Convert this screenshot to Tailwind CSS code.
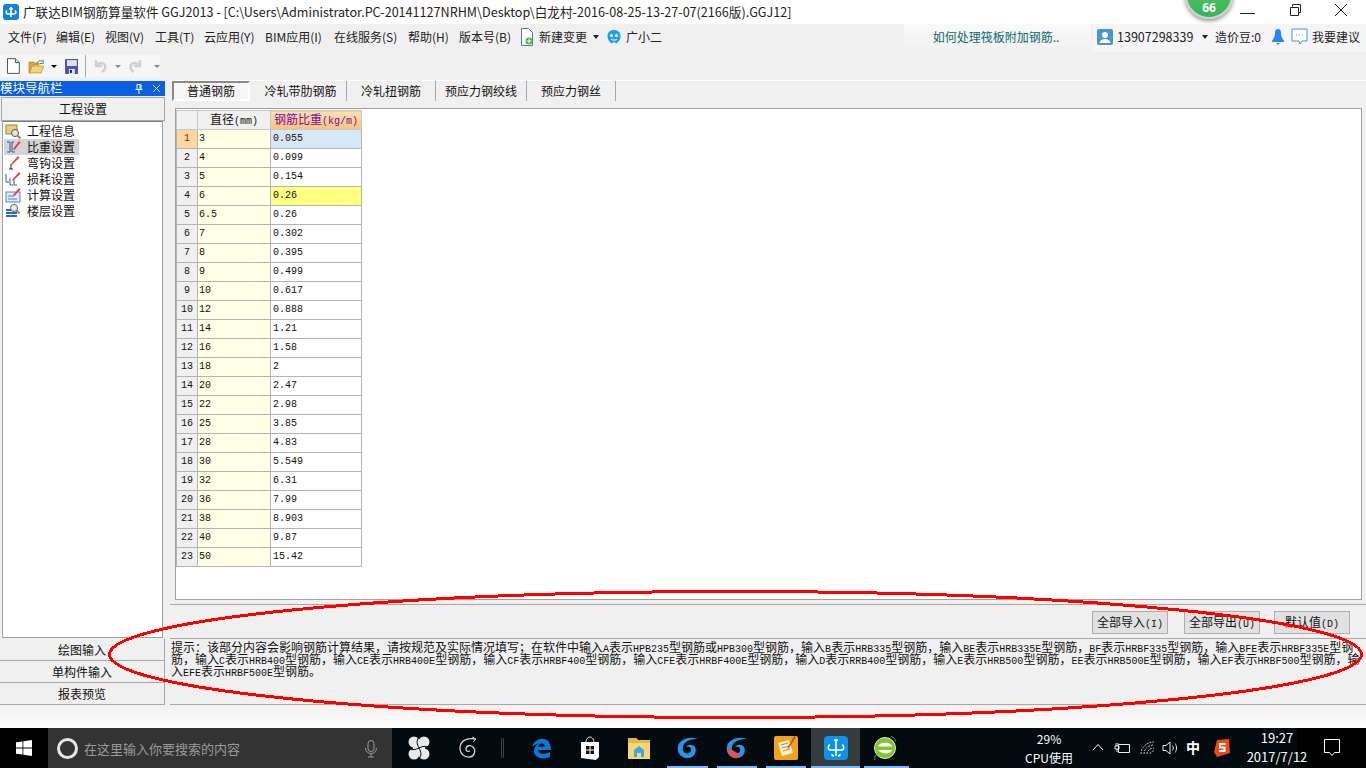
<!DOCTYPE html>
<html lang="zh-CN">
<head>
    <meta charset="UTF-8">
    <title>广联达BIM钢筋算量软件 GGJ2013</title>
    <script src="https://cdn.jsdelivr.net/npm/@tailwindcss/browser@4"></script>
</head>
<body class="bg-[#f0f0f0]">
<div class="relative w-[1366px] h-[768px] overflow-hidden flex flex-col bg-[#f0f0f0] text-[12px] leading-none text-[#111] font-['Noto_Sans_CJK_SC',sans-serif]">

    <!-- title bar -->
    <div class="h-[24px] shrink-0 bg-white flex items-center relative">
        <svg class="ml-[3px] w-[16px] h-[16px]" viewBox="0 0 16 16"><rect width="16" height="16" rx="3" fill="#1283dd"/><path d="M8 3v10M4 6.500C2.500 8 3 10 5 10h6c2 0 2.500-2 1-3.500M6 5h4" stroke="#fff" stroke-width="1.700" fill="none"/></svg>
        <span class="ml-[4px] whitespace-nowrap text-[12.600px] text-[#222]">广联达BIM钢筋算量软件 GGJ2013 - [C:\Users\Administrator.PC-20141127NRHM\Desktop\白龙村-2016-08-25-13-27-07(2166版).GGJ12]</span>
        <svg class="absolute left-[1240px] top-[4px] w-[16px] h-[16px]" viewBox="0 0 16 16"><path d="M0 9.500h15" stroke="#222"/></svg>
        <svg class="absolute left-[1289px] top-[3px] w-[14px] h-[14px]" viewBox="0 0 14 14"><path d="M3.500 3.500V1.500h8v8h-2M1.500 4.500h8v8h-8z" stroke="#222" fill="none"/></svg>
        <svg class="absolute left-[1334px] top-[3px] w-[14px] h-[14px]" viewBox="0 0 14 14"><path d="M1 1l12 12M13 1L1 13" stroke="#222"/></svg>
    </div>

    <!-- menu bar -->
    <div class="h-[28px] shrink-0 flex items-center relative pb-[2px]">
        <div class="flex items-center pl-[8px] text-[#222] whitespace-nowrap">
            <span class="w-[48px]">文件(F)</span>
            <span class="w-[49px]">编辑(E)</span>
            <span class="w-[50px]">视图(V)</span>
            <span class="w-[49px]">工具(T)</span>
            <span class="w-[61px]">云应用(Y)</span>
            <span class="w-[69px]">BIM应用(I)</span>
            <span class="w-[74px]">在线服务(S)</span>
            <span class="w-[51px]">帮助(H)</span>
            <span class="w-[60px]">版本号(B)</span>
            <svg class="w-[16px] h-[18px] mr-[4px]" viewBox="0 0 16 18"><path d="M2.500.5h7l4 4v13h-11z" fill="#fff" stroke="#3f7fc0"/><circle cx="10" cy="13" r="3.500" fill="#58a83a"/><path d="M10 10.500v5M7.500 13h5" stroke="#fff"/></svg>
            <span class="w-[54px]">新建变更</span>
            <span class="w-0 h-0 border-x-[3px] border-x-transparent border-t-[4px] border-t-[#222] mr-[7px]"></span>
            <svg class="w-[16px] h-[16px] mr-[4px]" viewBox="0 0 16 16"><path d="M8 1c4 0 6.500 2.500 6.500 6 0 4-2.500 6-4 7.500L8 13l-2.500 1.500C4 13 1.500 11 1.500 7 1.500 3.500 4 1 8 1z" fill="#22a0e6"/><circle cx="5.500" cy="6.500" r="1.500" fill="#fff"/><circle cx="10.500" cy="6.500" r="1.500" fill="#fff"/><path d="M5 10c2 1.500 4 1.500 6 0" stroke="#fff" fill="none"/></svg>
            <span>广小二</span>
        </div>
        <!-- hot question + account -->
        <div class="absolute left-[904px] top-0 w-[187px] h-[28px] pb-[2px] pr-[3px] bg-gradient-to-b from-[#fafafa] to-[#f0f0f0] flex items-center justify-center text-[#0c6a6e]">如何处理筏板附加钢筋..</div>
        <div class="absolute left-[1093px] top-0 w-[273px] h-[28px] pb-[2px] bg-[#f5f5f5] flex items-center whitespace-nowrap text-[#222]">
            <svg class="ml-[4px] w-[16px] h-[16px] mr-[4px]" viewBox="0 0 16 16"><rect width="16" height="16" rx="2" fill="#4a94cf"/><circle cx="8" cy="6" r="3" fill="#fff"/><path d="M2.500 14c.5-3 3-4 5.500-4s5 1 5.500 4z" fill="#fff"/></svg>
            <span class="w-[84px] text-[12.500px]">13907298339</span>
            <span class="w-0 h-0 border-x-[3px] border-x-transparent border-t-[4px] border-t-[#222] ml-[1px] mr-[7px]"></span>
            <span class="w-[49px]">造价豆:0</span>
            <svg class="ml-[7px] w-[14px] h-[16px]" viewBox="0 0 14 16"><path d="M7 0c2 0 3 1.500 3 4 0 4 1.500 5.500 3 8v1H1v-1c1.500-2.500 3-4 3-8 0-2.500 1-4 3-4z" fill="#2a86ee"/><path d="M5 14h4l-2 2z" fill="#2a86ee"/></svg>
            <svg class="ml-[6px] w-[17px] h-[19px]" viewBox="0 0 17 19"><path d="M1 1h15v12h-5l-2 3-1-3H1z" fill="#fff" stroke="#4a94e0"/><path d="M5 7h1M8 7h1M11 7h1" stroke="#4a94e0"/></svg>
            <span class="ml-[4px]">我要建议</span>
        </div>
    </div>

    <!-- toolbar -->
    <div class="h-[28px] shrink-0 flex items-center">
        <div class="w-[160px] h-[22px] rounded-[3px] bg-[#f6f6f6] flex items-center pl-[7px]">
            <svg class="w-[13px] h-[16px]" viewBox="0 0 13 16"><path d="M.5.5h8l4 4v11H.500z" fill="#fff" stroke="#44546a"/><path d="M8.500.5v4h4" fill="#dde6f0" stroke="#44546a"/></svg>
            <svg class="ml-[8px] w-[17px] h-[15px]" viewBox="0 0 17 15"><path d="M1 3h5l1 1h4v2H5l-2 8H1z" fill="#d9a93c" stroke="#9a7420" stroke-width=".6"/><path d="M4 7h12l-2.500 7H1.500z" fill="#f6d672" stroke="#a8802a" stroke-width=".6"/><path d="M9 4c1-2 3-3 5-2l1.500-1v3.500H12" stroke="#5a7fa8" fill="none"/></svg>
            <span class="ml-[6px] w-0 h-0 border-x-[3px] border-x-transparent border-t-[3px] border-t-black"></span>
            <svg class="ml-[8px] w-[14px] h-[15px]" viewBox="0 0 14 15"><rect width="14" height="15" rx="1" fill="#4a55b8"/><rect x="2" y="1" width="10" height="6" fill="#dfe3ee"/><rect x="4" y="10" width="6" height="5" fill="#dfe3ee"/><rect x="5" y="11" width="2" height="3" fill="#222"/></svg>
            <span class="ml-[7px] w-px h-[22px] bg-[#aaa]"></span>
            <svg class="ml-[8px] w-[13px] h-[14px]" viewBox="0 0 13 14"><path d="M2 1v6h6M2.500 6.500C5 3 11.500 3 11.500 8c0 2.500-1.500 4-3.500 5" stroke="#d0d0d0" stroke-width="2.500" fill="none"/></svg>
            <span class="ml-[8px] w-0 h-0 border-x-[3px] border-x-transparent border-t-[3px] border-t-[#888]"></span>
            <svg class="ml-[8px] w-[13px] h-[14px]" viewBox="0 0 13 14"><path d="M11 1v6H5M10.500 6.500C8 3 1.500 3 1.500 8c0 2.500 1.500 4 3.500 5" stroke="#d0d0d0" stroke-width="2.500" fill="none"/></svg>
            <span class="ml-[12px] w-0 h-0 border-x-[3px] border-x-transparent border-t-[3px] border-t-[#888]"></span>
        </div>
    </div>

    <!-- main -->
    <div class="h-[625px] shrink-0 flex">
        <!-- navigation column -->
        <div class="w-[165px] shrink-0 flex flex-col pt-px">
            <div class="h-[15px] bg-[#0a5fe2] text-white flex items-center text-[12.500px] relative">
                <span>模块导航栏</span>
                <svg class="absolute left-[135px] top-[3px] w-[8px] h-[10px]" viewBox="0 0 8 10"><path d="M2 .5h4v5H2zM.5 5.500h7M4 5.500V10M5 .5v5" stroke="#fff" fill="none"/></svg>
                <svg class="absolute left-[152px] top-[3px] w-[9px] h-[9px]" viewBox="0 0 9 9"><path d="M1 1l7 7M8 1L1 8" stroke="#cfe0fa"/></svg>
            </div>
            <div class="mt-[1px] ml-px h-[24px] border border-[#a8a8a8] flex items-center justify-center">工程设置</div>
            <div class="mx-[2px] h-[517px] bg-white border border-[#a0a0a0] border-t-[#808080] pt-px pl-[1px]">
                <div class="flex flex-col" id="navList"></div>
            </div>
            <div class="mt-px h-[22px] border-b border-r border-[#a8a8a8] flex items-center justify-center">绘图输入</div>
            <div class="h-[22px] border-b border-r border-[#a8a8a8] flex items-center justify-center">单构件输入</div>
            <div class="h-[22px] border-b border-r border-[#a8a8a8] flex items-center justify-center">报表预览</div>
        </div>

        <!-- content column -->
        <div class="ml-[5px] flex-1 flex flex-col min-w-0">
            <div class="h-[21px] shrink-0 flex items-center pl-[2px] border-t border-white">
                <div class="w-[78px] h-[20px] border-2 border-[#8a8a8a] border-r-white border-b-white bg-[#f6f6f6] flex items-center justify-center">普通钢筋</div>
                <div class="w-[97px] h-[20px] border-r border-[#a8a8a8] flex items-center justify-center pl-[5px]">冷轧带肋钢筋</div>
                <div class="w-[89px] h-[20px] border-r border-[#a8a8a8] flex items-center justify-center">冷轧扭钢筋</div>
                <div class="w-[91px] h-[20px] border-r border-[#a8a8a8] flex items-center justify-center">预应力钢绞线</div>
                <div class="w-[89px] h-[20px] border-r border-[#a8a8a8] flex items-center justify-center">预应力钢丝</div>
            </div>
            <!-- grid box -->
            <div class="mt-[7px] ml-[5px] mr-[4px] h-[492px] shrink-0 bg-white border border-[#a0a0a0] pt-px">
                <table class="border-collapse table-fixed w-[185px] text-[10px] font-['Liberation_Mono',monospace] leading-none" id="grid"></table>
            </div>
            <div class="mt-[4px] h-[34px] shrink-0 border-t border-[#a8a8a8] flex justify-end items-start pt-[6px] pr-[16px] text-[10px] font-['Liberation_Mono',monospace]">
                <button class="w-[76px] h-[23px] bg-[#e1e1e1] border border-[#adadad]"><span class="font-['Noto_Sans_CJK_SC',sans-serif] text-[12px]">全部导入</span>(I)</button>
                <button class="ml-[16px] w-[76px] h-[23px] bg-[#e1e1e1] border border-[#adadad]"><span class="font-['Noto_Sans_CJK_SC',sans-serif] text-[12px]">全部导出</span>(U)</button>
                <button class="ml-[14px] w-[76px] h-[23px] bg-[#e1e1e1] border border-[#adadad]"><span class="font-['Noto_Sans_CJK_SC',sans-serif] text-[12px]">默认值</span>(D)</button>
            </div>
            <div class="h-[67px] border-t border-b border-[#a8a8a8] pl-px pt-[2px] whitespace-nowrap" id="notice"></div>
        </div>
    </div>

    <!-- strip above the taskbar -->
    <div class="h-[23px] shrink-0 bg-gradient-to-b from-[#f0f0f0] to-white"></div>

    <!-- taskbar -->
    <div class="h-[40px] shrink-0 bg-[#02090f] flex items-stretch text-white relative">
        <div class="w-[48px] bg-black flex items-center justify-center">
            <svg class="w-[16px] h-[16px]" viewBox="0 0 16 16"><path d="M0 2.300l6.500-.9v6.200H0zM7.300 1.300L16 0v7.600H7.300zM0 8.400h6.500v6.200L0 13.700zM7.300 8.400H16V16l-8.700-1.300z" fill="#fff"/></svg>
        </div>
        <div class="w-[344px] bg-[#333] flex items-center relative text-[#9a9a9a] text-[13px]">
            <span class="ml-[9px] w-[21px] h-[21px] rounded-full border-[3px] border-[#e6e6e6]"></span>
            <span class="ml-[6px]">在这里输入你要搜索的内容</span>
            <svg class="absolute left-[316px] top-[12px] w-[14px] h-[18px]" viewBox="0 0 14 18"><rect x="4" y="0.500" width="6" height="11" rx="3" fill="none" stroke="#999"/><path d="M1.500 8c0 3.500 2.500 5.500 5.500 5.500s5.500-2 5.500-5.500M7 13.500V17M4 17h6" stroke="#999" fill="none"/></svg>
        </div>
        <div class="w-[2px]"></div>
        <div class="w-[49px] flex items-center justify-center">
            <svg class="w-[22px] h-[24px]" viewBox="0 0 22 24"><circle cx="6" cy="6" r="5.500" fill="#e8e8e8"/><circle cx="16" cy="6" r="5.500" fill="#e8e8e8"/><circle cx="6" cy="18" r="5.500" fill="#e8e8e8"/><circle cx="16" cy="18" r="5.500" fill="#e8e8e8"/><rect x="5" y="6" width="12" height="12" fill="#e8e8e8"/><path d="M11 12C9 8 8 5 11 1M11 12c4-2 6-2 10-1M11 12c2 4 3 7 0 11M11 12c-4 2-6 2-10 1" stroke="#02090f" fill="none"/></svg>
        </div>
        <div class="w-[49px] flex items-center justify-center">
            <svg class="w-[20px] h-[22px]" viewBox="0 0 20 22"><path d="M17 2C10 .5 3 3 2 10c-.5 6 4 11 10 10 5-1 6-7 3-10-2.500-2.500-7-1.500-7 2 0 2 2 3 4 2" fill="none" stroke="#cfcfcf" stroke-width="1.300"/><path d="M14 0l4 2-3 3" fill="none" stroke="#cfcfcf"/></svg>
        </div>
        <div class="w-[25px] flex items-center pl-[9px]"><span class="w-[3px] h-[20px] border-x border-[#3c4248]"></span></div>
        <div class="w-[49px] flex items-center justify-center">
            <svg class="w-[21px] h-[21px]" viewBox="0 0 21 21"><path d="M1 9C3 3 8 0 13 1c5 1 7 5 7 11H7c.5 4 6 5 12 2v5c-7 3-15 1-16-5C2.500 10 5 7 8 5 6 6 3 7 1 9zM7 8.500h7c0-4-6-4-7 0z" fill="#0a78d7"/></svg>
        </div>
        <div class="w-[48px] flex items-center justify-center">
            <svg class="w-[20px] h-[24px]" viewBox="0 0 20 24"><path d="M6 7c0-8 8-8 8 0" fill="none" stroke="#fff"/><path d="M1 6h18v15l-3 3-15-2z" fill="#fff"/><path d="M6 10h3.500v3.500H6zM10.500 10H14v3.500h-3.500zM6 14.500h3.500V18H6zM10.500 14.500H14V18h-3.500z" fill="#111"/></svg>
        </div>
        <div class="w-[49px] flex items-center justify-center">
            <svg class="w-[22px] h-[22px]" viewBox="0 0 22 22"><path d="M0 1h8l2 2h12v19H0z" fill="#f7d774"/><path d="M0 1h8l2 2h12v3H0z" fill="#e3b84a"/><path d="M6 13l5-4 5 4v7h-3v-4H9v4H6z" fill="#3aa7e6"/></svg>
        </div>
        <div class="w-[49px] flex items-center justify-center relative">
            <svg class="w-[24px] h-[24px]" viewBox="0 0 24 24"><path d="M22 3C14 0 4 3 2 10c-2 8 5 13 11 12 6-1 8-7 6-11-2-3-7-3-9 0 3-1 5 0 5 3s-3 4-6 3c-3-2-3-7 0-10 3-3 7-4 13-4z" fill="#2496e8"/></svg>
            <span class="absolute left-[4px] right-[4px] bottom-0 h-[2px] bg-[#7cb9f0]"></span>
        </div>
        <div class="w-[49px] flex items-center justify-center relative">
            <svg class="w-[24px] h-[24px]" viewBox="0 0 24 24"><path d="M22 3C14 0 4 3 2 10c-2 8 5 13 11 12 6-1 8-7 6-11-2-3-7-3-9 0 3-1 5 0 5 3s-3 4-6 3c-3-2-3-7 0-10 3-3 7-4 13-4z" fill="#2496e8"/><path d="M2 11l14 8c-3 4-6 4-9 2-3-2-5-6-5-10z" fill="#e0505a"/></svg>
            <span class="absolute left-[5px] right-[4px] bottom-0 h-[2px] bg-[#7cb9f0]"></span>
        </div>
        <div class="w-[50px] flex items-center justify-center relative">
            <svg class="w-[24px] h-[24px]" viewBox="0 0 24 24"><rect width="24" height="24" rx="2" fill="#f2a21e"/><path d="M4 7l11-3 4 13-11 3z" fill="#fdf0cf"/><path d="M7 9l7-2M8 12l7-2M9 15l7-2" stroke="#b58a44"/><path d="M22 1l-7 11-2 1 1-2 6-11z" fill="#c2561c"/></svg>
            <span class="absolute left-[5px] right-[5px] bottom-0 h-[2px] bg-[#7cb9f0]"></span>
        </div>
        <div class="w-[49px] bg-[#363b3e] flex items-center justify-center relative">
            <svg class="w-[24px] h-[24px]" viewBox="0 0 24 24"><rect width="24" height="24" rx="4" fill="#0f92ea"/><path d="M12 4v16M6 9c-2 0-2.500 5 0 5h12c2.500 0 2-5 0-5M10 20c-2 0-2-2-2-2M14 20c2 0 2-2 2-2M10 4h4" stroke="#fff" stroke-width="1.600" fill="none"/></svg>
            <span class="absolute left-0 right-0 bottom-0 h-[2px] bg-[#7cb9f0]"></span>
        </div>
        <div class="w-[49px] flex items-center justify-center relative">
            <svg class="w-[24px] h-[26px]" viewBox="0 0 24 26"><circle cx="12" cy="13" r="10.500" fill="#7fc62a" stroke="#dfe9d2"/><path d="M5 11.500c1-5 13-5 14 0zM5 15h14c-1 4-10 5-14 0z" fill="#fff"/><path d="M18 1c2 1 4 3 5 5M2 25c-1-2 0-4 1-5" stroke="#5aa820" fill="none"/></svg>
            <span class="absolute left-[4px] right-0 bottom-0 h-[2px] bg-[#7cb9f0]"></span>
        </div>

        <!-- tray -->
        <div class="absolute left-[1009px] top-0 w-[80px] h-[40px] flex flex-col items-center justify-center gap-[7px] text-[12px]">
            <span>29%</span><span>CPU使用</span>
        </div>
        <svg class="absolute left-[1092px] top-[15px] w-[12px] h-[8px]" viewBox="0 0 12 8"><path d="M1 7l5-5.500L11 7" fill="none" stroke="#fff"/></svg>
        <svg class="absolute left-[1114px] top-[13px] w-[16px] h-[13px]" viewBox="0 0 16 13"><path d="M4.500 3.500h11v8h-11zM1 5h4v3H1zM2 2v3M4 2v3M3 8v3" stroke="#eee" fill="none"/></svg>
        <svg class="absolute left-[1140px] top-[13px] w-[15px] h-[14px]" viewBox="0 0 15 14"><path d="M1 13C1 6 7 1 14 1M4 13c0-5 4-9 10-9M7 13c0-3 3-6 7-6M10 13c0-1.500 2-3 4-3" stroke="#bbb" fill="none" stroke-dasharray="2 1"/></svg>
        <svg class="absolute left-[1162px] top-[13px] w-[16px] h-[14px]" viewBox="0 0 16 14"><path d="M1 4.500h3L8 1v12L4 9.500H1zM10.500 4.500c1 1.500 1 3.500 0 5M13 2.500c2 2.500 2 6.500 0 9" stroke="#eee" fill="none"/></svg>
        <span class="absolute left-[1186px] top-[12px] text-[14px] font-bold">中</span>
        <svg class="absolute left-[1214px] top-[11px] w-[16px] h-[18px]" viewBox="0 0 16 18"><path d="M3 1l12-1 1 14-13 4-3-5z" fill="#ee4a12"/><path d="M11.500 5H6v3.500h4.500V12H5" stroke="#fff" stroke-width="2" fill="none"/></svg>
        <div class="absolute left-[1297px] top-0 w-[69px] h-[40px] bg-black"></div>
        <div class="absolute left-[1237px] top-0 w-[80px] h-[40px] pb-[2px] flex flex-col items-center justify-center gap-[6px] text-[13px]">
            <span>19:27</span><span>2017/7/12</span>
        </div>
        <svg class="absolute left-[1324px] top-[11px] w-[16px] h-[18px]" viewBox="0 0 16 18"><path d="M.5.5h15v13h-5l-2.500 3-2.500-3h-5z" fill="none" stroke="#fff"/></svg>
    </div>

    <!-- score badge over the title bar -->
    <div class="absolute left-[1185px] top-[-29px] w-[48px] h-[48px] rounded-full bg-gradient-to-b from-[#5fce6e] to-[#35b257] border-2 border-[#d0d0d0] shadow-[0_2px_4px_rgba(0,0,0,0.45)] flex items-end justify-center pb-[3px] text-white text-[12px] font-bold font-['Open_Sans',sans-serif]">66</div>

    <!-- red ellipse drawn on top of the screenshot -->
    <svg class="absolute left-0 top-0 w-[1366px] h-[768px] pointer-events-none" viewBox="0 0 1366 768"><ellipse cx="735.500" cy="654.500" rx="626" ry="63" fill="none" stroke="#ff0000" stroke-width="3" shape-rendering="crispEdges"/></svg>
</div>

<script>
    const monoClass = "font-['Liberation_Mono',monospace] text-[10px]";

    // 宋体 style: half width latin next to the hanzi, full width punctuation
    function halfWidth(text) {
        return text
            .replace(/,/g, '\uFF0C').replace(/;/g, '\uFF1B').replace(/:/g, '\uFF1A')
            .replace(/[A-Za-z0-9]+/g, m => `<span class="${monoClass}">${m}</span>`);
    }

    const noticeLines = [
        '提示:该部分内容会影响钢筋计算结果,请按规范及实际情况填写;在软件中输入A表示HPB235型钢筋或HPB300型钢筋,输入B表示HRB335型钢筋,输入BE表示HRB335E型钢筋,BF表示HRBF335型钢筋,输入BFE表示HRBF335E型钢',
        '筋,输入C表示HRB400型钢筋,输入CE表示HRB400E型钢筋,输入CF表示HRBF400型钢筋,输入CFE表示HRBF400E型钢筋,输入D表示RRB400型钢筋,输入E表示HRB500型钢筋,EE表示HRB500E型钢筋,输入EF表示HRBF500型钢筋,输',
        '入EFE表示HRBF500E型钢筋。'
    ];
    document.getElementById('notice').innerHTML = noticeLines.map(l => `<div class="h-[12px] leading-[12px]">${halfWidth(l)}</div>`).join('');

    const navIcons = [
        '<rect x="1" y="2" width="11" height="9" fill="#e8cf80" stroke="#a08030"/><circle cx="10" cy="10" r="3.500" fill="#dfe9f5" stroke="#555"/><path d="M12.500 12.500l3 3" stroke="#b08030" stroke-width="2"/>',
        '<path d="M2 3H5V13H2M9 3h-2v10h3" stroke="#2a5fa8" fill="none"/><path d="M8 10l6-8 1.500 1.500-6 7.500z" fill="#e0453a"/>',
        '<path d="M6 9v5M4 14h4" stroke="#222"/><path d="M6 9l7-8 1.500 1.500L7 10z" fill="#e0453a"/>',
        '<path d="M1 3v8h3M5 7v7h3M9 9v5h3" stroke="#2a5fa8" fill="none"/><path d="M7 9l7-8 1.500 1.500L8 10z" fill="#e0453a"/>',
        '<rect x="1" y="5" width="14" height="10" fill="#dbe9f8" stroke="#5a86b8"/><path d="M3 9h6M3 12h9" stroke="#5a86b8"/><path d="M8 8l6-7 1.500 1.500-6 6.500z" fill="#e0453a"/>',
        '<path d="M1 7h11M1 10h11M1 13h11" stroke="#2a6ab8" stroke-width="2"/><circle cx="9" cy="5" r="3.500" fill="#e4eaf2" stroke="#666"/><path d="M11.500 7.500l3 3" stroke="#b08030" stroke-width="2"/>'
    ];
    const navNames = ['工程信息', '比重设置', '弯钩设置', '损耗设置', '计算设置', '楼层设置'];
    document.getElementById('navList').innerHTML = navNames.map((name, i) => `
        <div class="h-[16px] flex items-center ${i === 1 ? 'w-[75px] bg-[#d4d4d4]' : ''}">
            <svg class="ml-[1px] w-[16px] h-[16px] shrink-0" viewBox="0 0 16 16">${navIcons[i]}</svg>
            <span class="ml-[6px]">${name}</span>
        </div>`).join('');

    const rows = [
        ['3', '0.055'], ['4', '0.099'], ['5', '0.154'], ['6', '0.26'], ['6.5', '0.26'], ['7', '0.302'],
        ['8', '0.395'], ['9', '0.499'], ['10', '0.617'], ['12', '0.888'], ['14', '1.21'], ['16', '1.58'],
        ['18', '2'], ['20', '2.47'], ['22', '2.98'], ['25', '3.85'], ['28', '4.83'], ['30', '5.549'],
        ['32', '6.31'], ['36', '7.99'], ['38', '8.903'], ['40', '9.87'], ['50', '15.42']
    ];
    const cjk = "font-['Noto_Sans_CJK_SC',sans-serif] text-[12px]";
    let html = `<colgroup><col class="w-[21px]"><col class="w-[73px]"><col class="w-[91px]"></colgroup>
        <tr class="h-[19px]">
            <th class="border border-[#c8c8c8] bg-[#f0f0f0]"></th>
            <th class="border border-[#c8c8c8] bg-[#f0f0f0] font-normal text-center"><span class="${cjk}">直径</span>(mm)</th>
            <th class="border border-[#c8c8c8] bg-gradient-to-b from-[#fde2b4] to-[#f8c27a] font-normal text-center text-[#7a0aa0] whitespace-nowrap"><span class="${cjk}">钢筋比重</span>(kg/m)</th>
        </tr>`;
    rows.forEach((r, i) => {
        const head = i === 0 ? 'bg-[#fcd7a0] text-[#a02000]' : 'bg-[#f0f0f0]';
        const val = i === 0 ? 'bg-[#d6e8f7]' : i === 3 ? 'bg-[#ffff80]' : 'bg-white';
        html += `<tr class="h-[19px]">
            <td class="border border-[#b4b4b4] text-center ${head}">${i + 1}</td>
            <td class="border border-[#b4b4b4] bg-[#ffffe6] pl-[1px]">${r[0]}</td>
            <td class="border border-[#b4b4b4] pl-[2px] ${val}">${r[1]}</td>
        </tr>`;
    });
    document.getElementById('grid').innerHTML = html;
</script>
</body>
</html>
